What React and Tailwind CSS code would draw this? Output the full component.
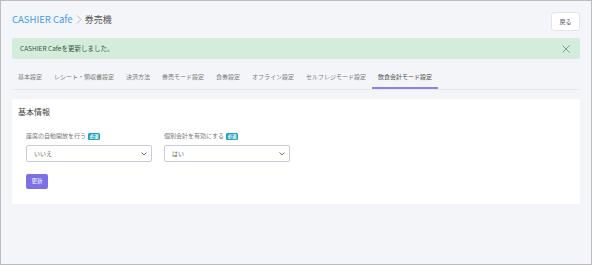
const TABS = [
  "基本設定",
  "レシート・領収書設定",
  "決済方法",
  "券売モード設定",
  "食券設定",
  "オフライン設定",
  "セルフレジモード設定",
  "飲食会計モード設定",
];

const font = { fontFamily: '"Noto Sans CJK JP", "Noto Sans", sans-serif' };

function Chevron() {
  return (
    <svg width="6" height="4" viewBox="0 0 6 4" className="text-[#666]">
      <polyline points="0.5,0.5 3,3 5.5,0.5" fill="none" stroke="currentColor" strokeWidth="0.9" />
    </svg>
  );
}

function Field({ label, value }) {
  return (
    <div className="w-[126px]">
      <div className="flex items-center gap-[2px] text-[6px] leading-[10px] text-[#777]">
        <span>{label}</span>
        <span className="rounded-[1.5px] bg-[#1b9cb8] px-[1.5px] text-[4.5px] leading-[7px] font-bold text-white">必須</span>
      </div>
      <div className="mt-[4px] flex h-[17px] items-center justify-between rounded-[2px] border border-[#cacbd9] bg-white pl-[7px] pr-[4px] text-[6px] text-[#666]">
        <span>{value}</span>
        <Chevron />
      </div>
    </div>
  );
}

export default function App() {
  return (
    <div
      style={font}
      className="h-[265px] w-[592px] overflow-hidden border border-[#bcbcbc] bg-[#f4f5f9] px-[11px] pt-[11px]"
    >
      <header className="flex items-start justify-between">
        <div className="flex items-center pt-[1px] text-[9px] leading-[13px]">
          <span className="text-[9.5px] text-[#3e9de8]">CASHIER Cafe</span>
          <svg width="6" height="9" viewBox="0 0 6 9" className="mx-[3px] text-[#aaa]">
            <polyline points="1,0.5 5,4.5 1,8.5" fill="none" stroke="currentColor" strokeWidth="0.8" />
          </svg>
          <span className="text-[#555]">券売機</span>
        </div>
        <button className="h-[19px] w-[29px] rounded-[3px] border border-[#e3e4ea] bg-white text-[6px] text-[#555]">
          戻る
        </button>
      </header>

      <div className="mt-[7px] flex h-[21px] items-center justify-between rounded-[2px] bg-[#d4ecdb] pl-[8px] pr-[10px] text-[6.5px] text-[#35573f]">
        <span>CASHIER Cafeを更新しました。</span>
        <svg width="8" height="8" viewBox="0 0 8 8" className="text-[#6a9c78]">
          <path d="M0.5 0.5 L7.5 7.5 M7.5 0.5 L0.5 7.5" stroke="currentColor" strokeWidth="0.9" />
        </svg>
      </div>

      <nav className="mt-[7px] flex border-b border-[#e6e7ef]">
        {TABS.map((t, i) => {
          const active = i === TABS.length - 1;
          return (
            <div
              key={t}
              className={
                active
                  ? "flex h-[23px] items-center border-b-2 border-[#8a84ea] px-[6px] text-[6px] text-[#4a4a4a]"
                  : "flex h-[23px] items-center border-b-2 border-transparent px-[6px] text-[6px] text-[#7a7a7a]"
              }
            >
              {t}
            </div>
          );
        })}
      </nav>

      <section className="mt-[9px] rounded-[3px] bg-white pb-[15px] pl-[6px] pt-[7px]">
        <h2 className="text-[8px] leading-[12px] text-[#444]">基本情報</h2>
        <div className="mt-[13px] pl-[8px]">
          <div className="flex gap-[12px]">
            <Field label="座席の自動開放を行う" value="いいえ" />
            <Field label="個別会計を有効にする" value="はい" />
          </div>
          <button className="mt-[12px] h-[15px] w-[22px] rounded-[2px] bg-[#7b70e6] text-[5.5px] text-white">
            更新
          </button>
        </div>
      </section>
    </div>
  );
}
